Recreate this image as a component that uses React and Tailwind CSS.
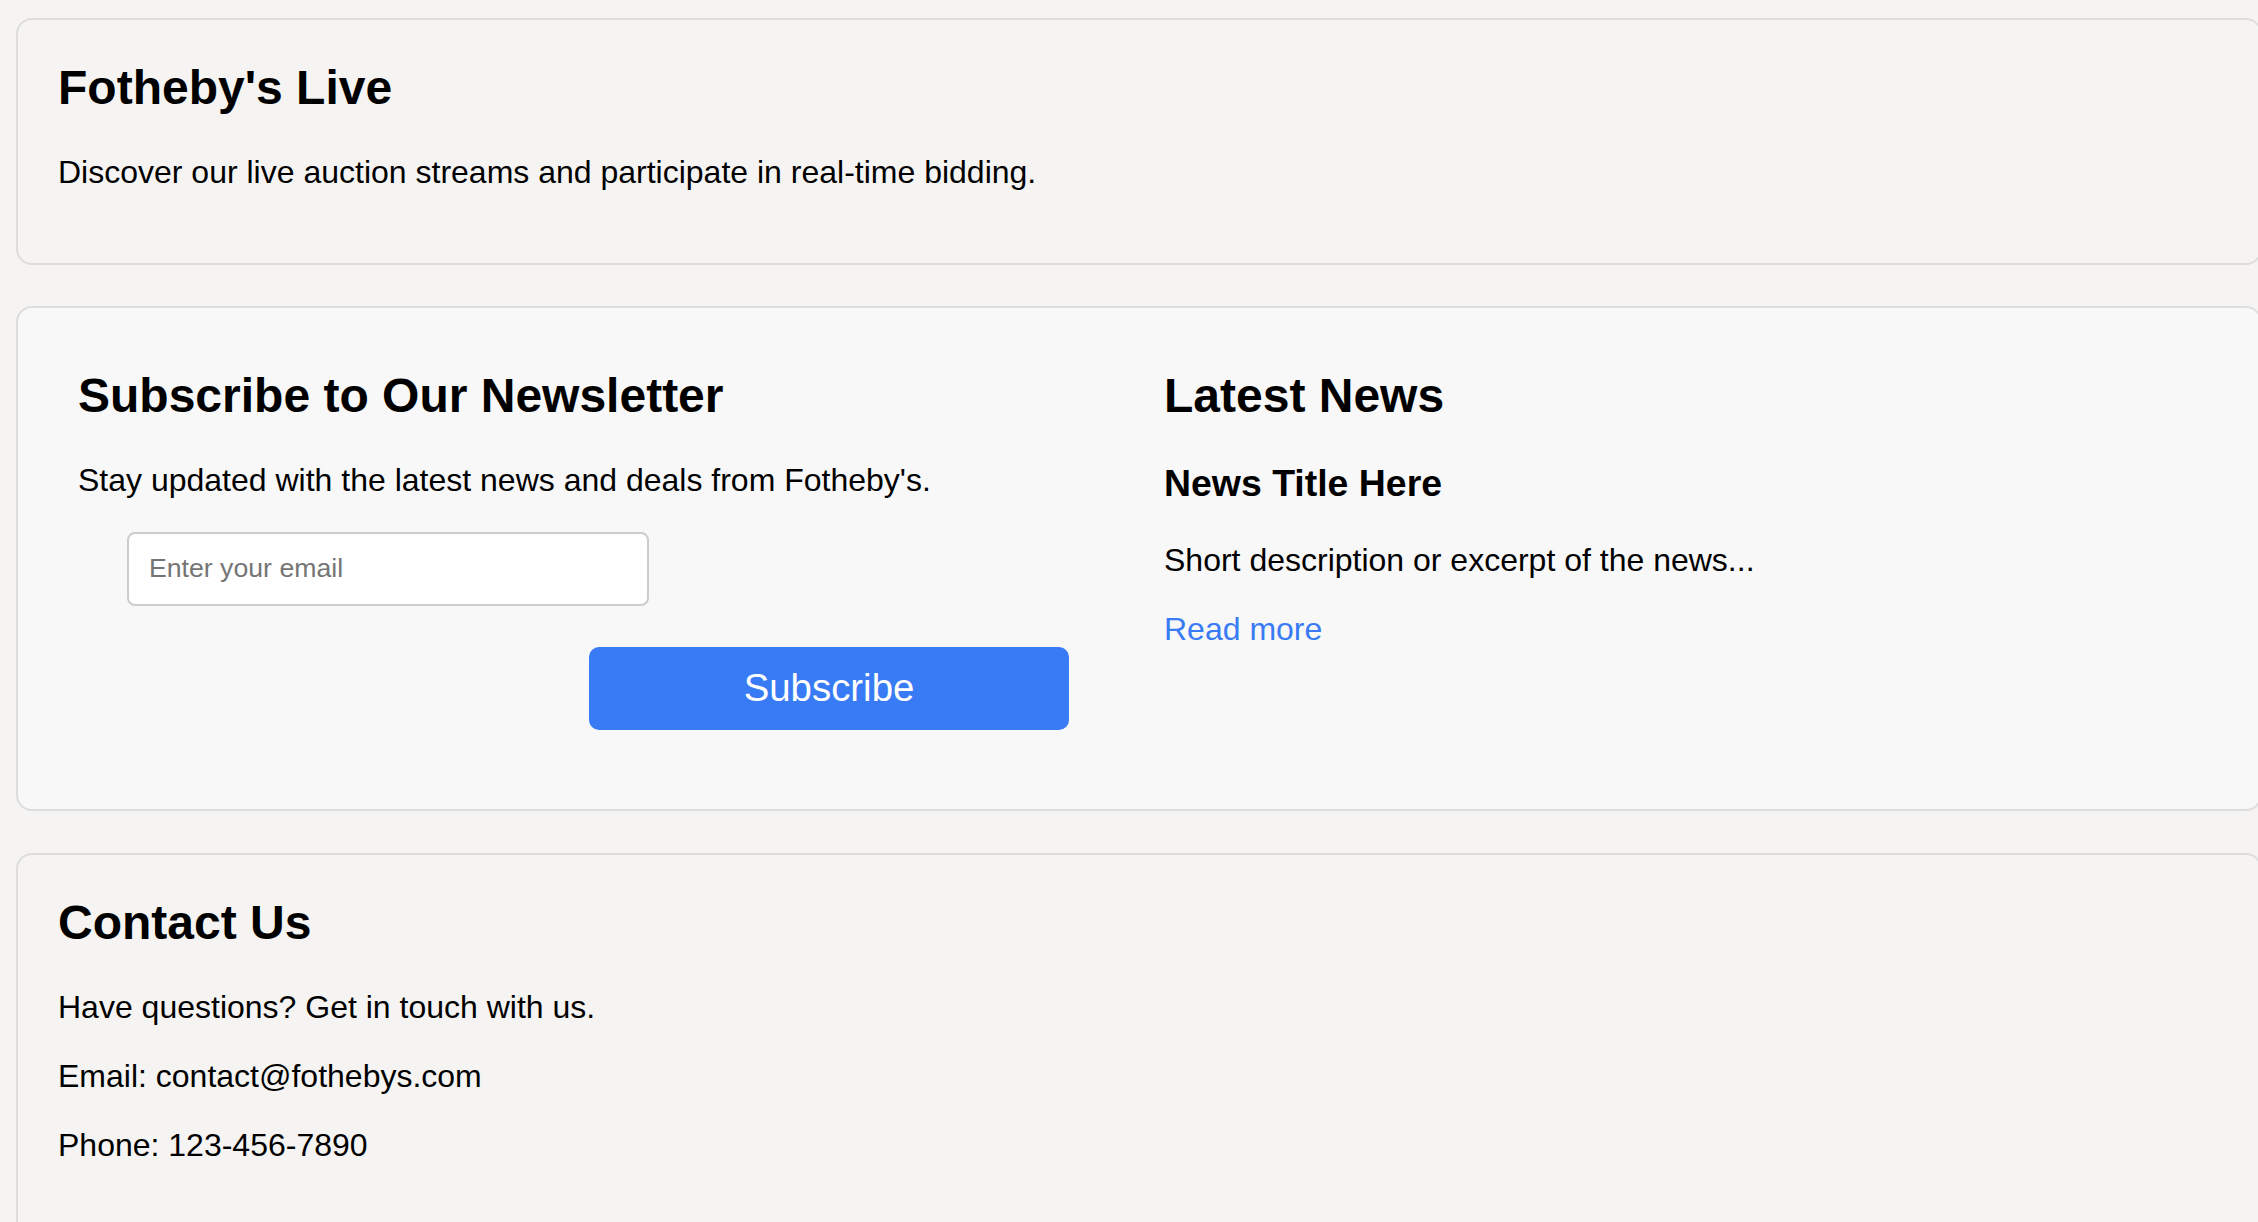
import React from 'react';

const Card = ({ className = '', children }) => (
  <section className={`ml-4 w-[2246px] rounded-[16px] border-2 border-[#dddddd] p-10 ${className}`}>
    {children}
  </section>
);

const App = () => {
  return (
    <div className="h-screen overflow-hidden bg-[#f5f4f2] pt-[18px] text-black font-['Liberation_Sans',Arial,sans-serif]">
      {/* LIVE */}
      <Card className="bg-[#f5f4f2]">
        <h2 className="mb-[39px] text-[48px] font-bold leading-[1.15]">Fotheby's Live</h2>
        <p className="mb-[32px] text-[32px] leading-[1.15]">
          Discover our live auction streams and participate in real-time bidding.
        </p>
      </Card>

      {/* NEWSLETTER + NEWS */}
      <Card className="mt-[41px] bg-[#f8f8f8]">
        <div className="flex">
          <div className="w-[1086px] shrink-0 p-5">
            <h2 className="mb-[39px] text-[48px] font-bold leading-[1.15]">Subscribe to Our Newsletter</h2>
            <p className="text-[32px] leading-[1.15]">Stay updated with the latest news and deals from Fotheby's.</p>
            <form className="flex flex-col" onSubmit={(e) => e.preventDefault()}>
              <input
                type="email"
                placeholder="Enter your email"
                className="mt-[33px] ml-[49px] h-[74px] w-[522px] self-start rounded-[8px] border-2 border-[#cccccc] bg-white px-5 text-[26.67px] text-black outline-none placeholder:text-[#757575]"
              />
              <button
                type="submit"
                className="mt-[41px] mb-[19px] mr-[55px] h-[83px] w-[480px] self-end rounded-[10px] bg-[#387bf5] text-[38.4px] leading-[1.15] text-white"
              >
                Subscribe
              </button>
            </form>
          </div>
          <div className="flex-1 p-5">
            <h2 className="mb-[39px] text-[48px] font-bold leading-[1.15]">Latest News</h2>
            <h3 className="mb-[37px] text-[37.44px] font-bold leading-[1.15]">News Title Here</h3>
            <p className="mb-[32px] text-[32px] leading-[1.15]">Short description or excerpt of the news...</p>
            <div className="text-[32px] leading-[1.15]">
              <a href="#" className="text-[#387bf5]">Read more</a>
            </div>
          </div>
        </div>
      </Card>

      {/* CONTACT */}
      <Card className="mt-[42px] bg-[#f5f4f2]">
        <h2 className="mb-[39px] text-[48px] font-bold leading-[1.15]">Contact Us</h2>
        <p className="mb-[32px] text-[32px] leading-[1.15]">Have questions? Get in touch with us.</p>
        <p className="mb-[32px] text-[32px] leading-[1.15]">Email: contact@fothebys.com</p>
        <p className="mb-[32px] text-[32px] leading-[1.15]">Phone: 123-456-7890</p>
      </Card>
    </div>
  );
};

export default App;
